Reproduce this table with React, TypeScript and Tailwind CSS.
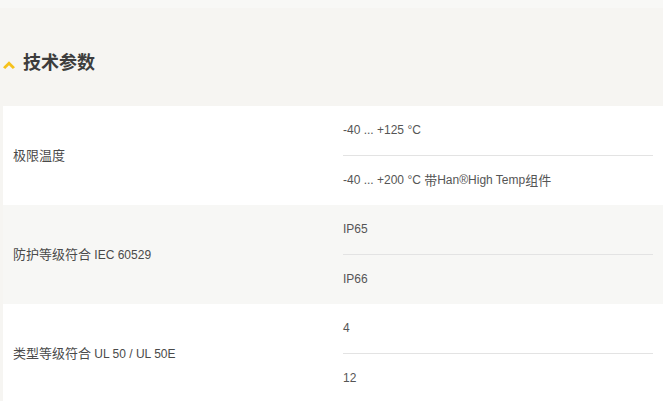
import React from "react";

const font = { fontFamily: '"Liberation Sans", "Noto Sans CJK SC", sans-serif' };

function C({ children }: { children: React.ReactNode }) {
  return <span className="text-[13px]">{children}</span>;
}

type Row = { label: React.ReactNode; values: React.ReactNode[]; bg: string };

const rows: Row[] = [
  {
    label: <C>极限温度</C>,
    values: [
      "-40 ... +125 °C",
      <>
        {"-40 ... +200 °C "}
        <C>带</C>
        {"Han®High Temp"}
        <C>组件</C>
      </>,
    ],
    bg: "bg-white",
  },
  {
    label: (
      <>
        <C>防护等级符合</C>
        {" IEC 60529"}
      </>
    ),
    values: ["IP65", "IP66"],
    bg: "bg-[#f7f7f5]",
  },
  {
    label: (
      <>
        <C>类型等级符合</C>
        {" UL 50 / UL 50E"}
      </>
    ),
    values: ["4", "12"],
    bg: "bg-white",
  },
];

export default function App() {
  return (
    <div className="w-[663px] h-[401px] overflow-hidden bg-[#f6f5f2]" style={font}>
      <div className="h-[8px] bg-[#f8f8f6]" />
      <div className="h-[98px] flex items-center pl-[3px] pt-[12px]">
        <svg width="12" height="9" viewBox="0 0 12 9" className="shrink-0 mt-[3px] block">
          <path d="M0 7.2 L6 1.2 L12 7.2 L9.8 9 L6 5.2 L2.2 9 Z" fill="#f6c21c" />
        </svg>
        <span className="ml-[8px] text-[18px] leading-none font-bold text-[#3d3d3d] whitespace-pre">技术参数</span>
      </div>
      <div className="pl-[3px]">
        {rows.map((r, i) => (
          <div key={i} className={`flex ${r.bg}`}>
            <div className="w-[340px] pl-[10px] flex items-center text-[12px] text-[#4a4a4a] whitespace-pre">
              {r.label}
            </div>
            <div className="flex-1 pr-[10px]">
              {r.values.map((v, j) => (
                <div
                  key={j}
                  className={`h-[49.5px] flex items-center text-[12px] text-[#555] whitespace-pre ${
                    j === 0 ? "border-b border-[#e3e3e3]" : ""
                  }`}
                >
                  {v}
                </div>
              ))}
            </div>
          </div>
        ))}
      </div>
    </div>
  );
}
